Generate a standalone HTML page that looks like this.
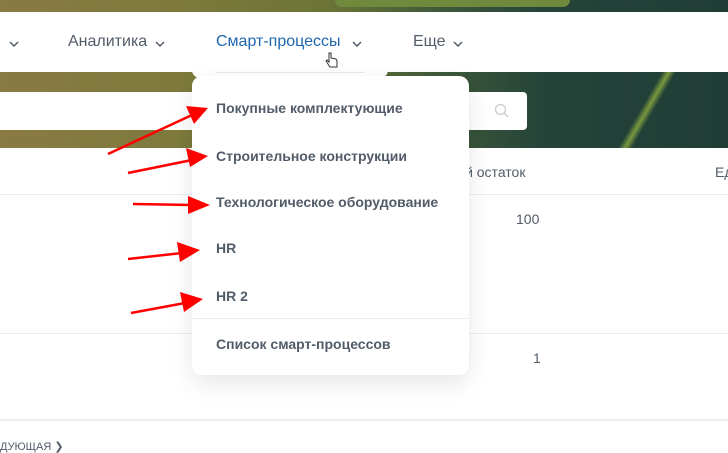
<!DOCTYPE html>
<html><head><meta charset="utf-8"><style>
*{margin:0;padding:0;box-sizing:border-box}
body{width:728px;height:453px;overflow:hidden;background:#fff;font-family:"Liberation Sans",sans-serif;position:relative;color:#333}
.photo{position:absolute;left:0;width:728px;background:linear-gradient(90deg,#8a7a44 0%,#7d7a3c 25%,#6b7436 45%,#3f5a3a 60%,#244339 75%,#1f3d35 100%)}
.nav{position:absolute;left:0;top:12px;width:728px;height:60px;background:#fff}
.ni{position:absolute;top:34px;font-size:15px;color:#525c69}
.t{position:absolute;font-size:14px;color:#525c69}
.dd{position:absolute;font-size:14px;color:#525c69;font-weight:bold;left:216px}
.ch{position:absolute;top:40px}
</style></head><body>
<div class="photo" style="top:0;height:12px"></div>
<div style="position:absolute;left:335px;top:0;width:235px;height:7px;background:#6f8a3c;border-radius:0 0 8px 8px"></div>
<div class="photo" style="top:72px;height:76px"></div>
<div style="position:absolute;left:640px;top:72px;width:14px;height:76px;background:linear-gradient(90deg,transparent,#8fae40,transparent);transform:skewX(-30deg);opacity:.8"></div>
<div class="nav"></div>
<svg class="ch" style="left:9px" width="10" height="8"><path d="M1 2l4 4 4-4" fill="none" stroke="#525c69" stroke-width="1.5"/></svg>
<div class="ni" style="left:68px;font-size:16px;top:33px">Аналитика</div>
<svg class="ch" style="left:155px" width="10" height="8"><path d="M1 2l4 4 4-4" fill="none" stroke="#525c69" stroke-width="1.5"/></svg>
<div style="position:absolute;left:192px;top:18px;width:196px;height:60px;background:#fff;border-radius:8px"></div>
<div class="ni" style="left:216px;color:#2067b0;font-size:16px;top:33px">Смарт-процессы</div>
<svg class="ch" style="left:352px" width="10" height="8"><path d="M1 2l4 4 4-4" fill="none" stroke="#525c69" stroke-width="1.5"/></svg>
<div class="ni" style="left:413px;font-size:16px;top:33px">Еще</div>
<svg class="ch" style="left:453px" width="10" height="8"><path d="M1 2l4 4 4-4" fill="none" stroke="#525c69" stroke-width="1.5"/></svg>
<div style="position:absolute;left:216px;top:72px;width:148px;height:1px;background:#e6e8ea"></div>
<div style="position:absolute;left:0;top:92px;width:527px;height:38px;background:#fff;border-radius:0 4px 4px 0"></div>
<svg style="position:absolute;left:494px;top:103px" width="16" height="16"><circle cx="6.5" cy="6.5" r="5" fill="none" stroke="#c8ccd0" stroke-width="1.3"/><line x1="10" y1="10" x2="14" y2="14" stroke="#c8ccd0" stroke-width="1.3"/></svg>
<div class="t" style="left:455px;top:164px">ый остаток</div>
<div class="t" style="left:715px;top:164px">Ед</div>
<div style="position:absolute;left:0;top:194px;width:728px;height:1px;background:#eceef0"></div>
<div class="t" style="left:516px;top:211px">100</div>
<div style="position:absolute;left:0;top:333px;width:728px;height:1px;background:#eceef0"></div>
<div class="t" style="left:533px;top:350px">1</div>
<div style="position:absolute;left:0;top:419px;width:728px;height:2px;background:#e8edf1"></div>
<div style="position:absolute;left:0;top:440px;font-size:11px;color:#525c69">ДУЮЩАЯ ❯</div>
<div style="position:absolute;left:192px;top:76px;width:277px;height:299px;background:#fff;border-radius:10px;box-shadow:0 8px 24px rgba(0,0,0,.1)"></div>
<div style="position:absolute;left:192px;top:318px;width:277px;height:1px;background:#eceef0"></div>
<div class="dd" style="top:100px">Покупные комплектующие</div>
<div class="dd" style="top:148px">Строительное конструкции</div>
<div class="dd" style="top:194px">Технологическое оборудование</div>
<div class="dd" style="top:240px">HR</div>
<div class="dd" style="top:288px">HR 2</div>
<div class="dd" style="top:336px">Список смарт-процессов</div>
<svg style="position:absolute;left:325px;top:52px" width="14" height="18"><path d="M4 1v9l-2-2-1 1 4 6h7v-6l-1-2-5-1V1z" fill="#fff" stroke="#333" stroke-width="1"/></svg>
<svg style="position:absolute;left:0;top:0" width="728" height="453">
<g fill="#f00" stroke="#f00" stroke-width="2.5">
<line x1="108" y1="154" x2="192" y2="115"/>
<line x1="128" y1="173" x2="192" y2="160"/>
<line x1="133" y1="204" x2="192" y2="205"/>
<line x1="128" y1="259" x2="182" y2="253"/>
<line x1="131" y1="313" x2="185" y2="303"/>
</g>
<g fill="#f00">
<polygon points="208,108 186,106 194,124"/>
<polygon points="208,156 186,148 190,167"/>
<polygon points="210,205 188,196 188,214"/>
<polygon points="200,250 177,242 180,262"/>
<polygon points="203,299 180,292 184,312"/>
</g></svg>
</body></html>
